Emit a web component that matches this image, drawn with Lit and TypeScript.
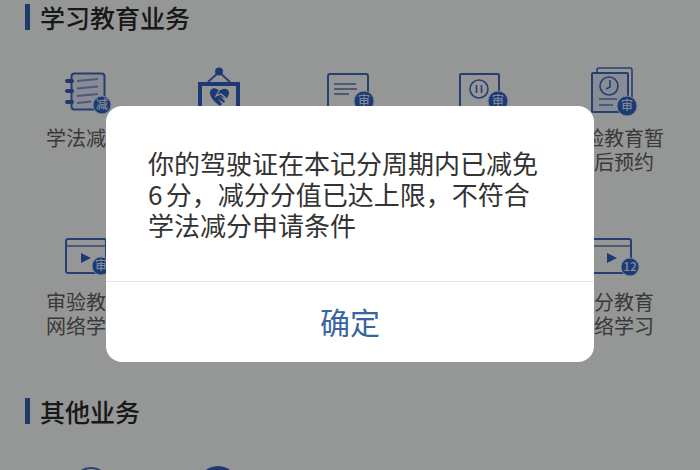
import { LitElement, html, css, svg, nothing, type TemplateResult } from "lit";
import { customElement, property } from "lit/decorators.js";

type IconName = "notebook" | "frame" | "document" | "pause" | "clock" | "video" | "videoScore" | "ring" | "disc";

interface Service {
  icon: IconName;
  label?: string;
  column: number;
}

const badge = (x: number, y: number, r: number, text: string) => svg`
  <circle class="badge" cx=${x} cy=${y} r=${r}></circle>
  <text class="badge-text" x=${x} y=${y + 4} text-anchor="middle">${text}</text>`;

const icons: Record<IconName, TemplateResult> = {
  notebook: svg`
    <rect class="line fill" x="11.5" y="5.5" width="33" height="36" rx="3"></rect>
    <path class="ring" d="M7 13h5M7 23h5M7 34h5"></path>
    <path class="soft" d="M17 13l21-2M17 20.500l21-2M17 28l21-2M17 35l14-1.500"></path>
    ${badge(42, 37, 9, "减")}`,
  frame: svg`
    <path class="line" d="M16 14l11-10 11 10"></path>
    <circle class="solid" cx="27" cy="3.5" r="4"></circle>
    <rect class="thick" x="8" y="16" width="38" height="36"></rect>
    <path class="solid" d="M27 23c-3-5-10-3-9 3 1 5 6 9 10 12l2-2-4-5 6 4 1-2-5-5 6 3c4-4 4-9 0-10-3-1-5 1-7 2z"></path>
    <path class="cut" d="M27 23l-3 5 5-2 6 5"></path>`,
  document: svg`
    <rect class="line" x="4" y="6" width="40" height="46" rx="2"></rect>
    <path class="soft" d="M10 16h22M10 21h23M10 26h15"></path>
    ${badge(40, 33, 10, "审")}`,
  pause: svg`
    <rect class="line" x="4" y="6" width="39" height="33" rx="1"></rect>
    <circle class="thin" cx="23" cy="21" r="9"></circle>
    <path class="thin" d="M20.500 17v8M25.500 17v8"></path>
    ${badge(42, 33, 10, "审")}`,
  clock: svg`
    <path class="thin" d="M9 4V2q0-2 2-2h31q2 0 2 2v29"></path>
    <rect class="line fill" x="4" y="5" width="36" height="39" rx="1"></rect>
    <circle class="thin" cx="21" cy="18" r="9"></circle>
    <path class="thin" d="M22 12v7l-4 2"></path>
    <path class="soft" d="M11 31h18M11 37h14"></path>
    ${badge(39, 38, 10, "审")}`,
  video: svg`
    <rect class="line" x="6" y="7" width="40" height="34" rx="2"></rect>
    <path class="soft" d="M7 14h38"></path>
    <path class="solid" d="M21 21l10 5-10 5z"></path>
    ${badge(41, 34, 9, "审")}`,
  videoScore: svg`
    <rect class="line" x="3" y="7" width="40" height="34" rx="2"></rect>
    <path class="soft" d="M4 14h38"></path>
    <path class="solid" d="M19 21l10 5-10 5z"></path>
    ${badge(42, 35, 9, "12")}`,
  ring: svg`<circle class="line" cx="31" cy="24" r="18"></circle>`,
  disc: svg`<circle class="solid" cx="26" cy="24" r="20"></circle>`,
};

@customElement("service-item")
class ServiceItem extends LitElement {
  @property() icon: IconName = "document";
  @property() label = "";

  static styles = css`
    :host { display: block; }
    .item {
      display: flex;
      flex-direction: column;
      align-items: center;
      gap: 10px;
      color: #606060;
      text-decoration: none;
      font-size: 20px;
      line-height: 24px;
    }
    .label { max-width: 104px; min-height: 48px; text-align: center; }
    .label.even { max-width: 84px; }
    svg { display: block; width: 52px; height: 48px; overflow: visible; }
    .line, .thin, .thick, .soft, .ring, .cut { fill: none; stroke: #4368bb; stroke-width: 2; }
    .thin { stroke-width: 1.6; }
    .thick { stroke: #2f5fc0; stroke-width: 4; }
    .soft { stroke: #7f97c6; stroke-width: 1.8; }
    .ring { stroke: #3560bb; stroke-width: 4; stroke-linecap: round; }
    .cut { stroke: #f8fafa; stroke-width: 1.2; }
    .line.fill { fill: #e2eafa; }
    .solid { fill: #2f5fc0; }
    .badge { fill: #2f62c4; stroke: #d3def5; stroke-width: 1; }
    .badge-text { fill: #d6e2fa; font-size: 12px; font-weight: 500; }
  `;

  render() {
    return html`<a class="item" href="#">
      <svg viewBox="0 0 52 48" aria-hidden="true">${icons[this.icon]}</svg>
      ${this.label
        ? html`<span class="label ${this.label.length === 8 ? "even" : ""}">${this.label}</span>`
        : nothing}
    </a>`;
  }
}

@customElement("app-root")
class AppRoot extends LitElement {
  static styles = css`
    :host {
      display: block;
      position: relative;
      height: 100vh;
      overflow: hidden;
      background: #f8fafa;
      font-family: "Noto Sans CJK SC", sans-serif;
    }
    .page { padding: 4px 20px 0; }
    .title {
      display: flex;
      align-items: center;
      gap: 10px;
      margin: 0 0 38px 5px;
      font-size: 25px;
      line-height: 26px;
      font-weight: 500;
      color: #292929;
    }
    .title::before { content: ""; width: 5px; height: 26px; background: #3163b0; }
    .grid {
      display: grid;
      grid-template-columns: repeat(5, 1fr);
      row-gap: 58px;
      margin-bottom: 60px;
    }
    .c1 { grid-column: 1; }
    .c2 { grid-column: 2; }
    .c3 { grid-column: 3; }
    .c4 { grid-column: 4; }
    .c5 { grid-column: 5; }
    .overlay {
      position: absolute;
      inset: 0;
      display: flex;
      align-items: center;
      padding: 0 106px 2px;
      background: rgba(0, 0, 0, 0.4);
    }
    .dialog {
      flex: 1;
      overflow: hidden;
      border-radius: 16px;
      background: #fff;
    }
    .message {
      margin: 0;
      padding: 41px 42px;
      font-size: 26px;
      line-height: 31px;
      text-autospace: normal;
      color: #333;
    }
    .confirm {
      display: block;
      width: 100%;
      height: 81px;
      padding: 0 0 2px;
      border: 0;
      border-top: 1px solid #e6e6e6;
      background: none;
      font-family: inherit;
      font-size: 30px;
      color: #3a64a0;
    }
  `;

  private study: Service[] = [
    { icon: "notebook", label: "学法减分", column: 1 },
    { icon: "frame", column: 2 },
    { icon: "document", column: 3 },
    { icon: "pause", column: 4 },
    { icon: "clock", label: "审验教育暂缓后预约", column: 5 },
    { icon: "video", label: "审验教育网络学习", column: 1 },
    { icon: "videoScore", label: "满分教育网络学习", column: 5 },
  ];

  private other: Service[] = [
    { icon: "ring", column: 1 },
    { icon: "disc", column: 2 },
  ];

  private section(title: string, items: Service[]) {
    return html`<section>
      <h2 class="title">${title}</h2>
      <div class="grid">
        ${items.map((s) => html`<service-item class="c${s.column}" .icon=${s.icon} .label=${s.label ?? ""}></service-item>`)}
      </div>
    </section>`;
  }

  render() {
    return html`
      <main class="page" lang="zh-CN">
        ${this.section("学习教育业务", this.study)}
        ${this.section("其他业务", this.other)}
      </main>
      <div class="overlay" lang="zh-CN">
        <div class="dialog" role="alertdialog" aria-modal="true" aria-describedby="message">
          <p class="message" id="message">你的驾驶证在本记分周期内已减免6分，减分分值已达上限，不符合学法减分申请条件</p>
          <button class="confirm" type="button">确定</button>
        </div>
      </div>
    `;
  }
}
